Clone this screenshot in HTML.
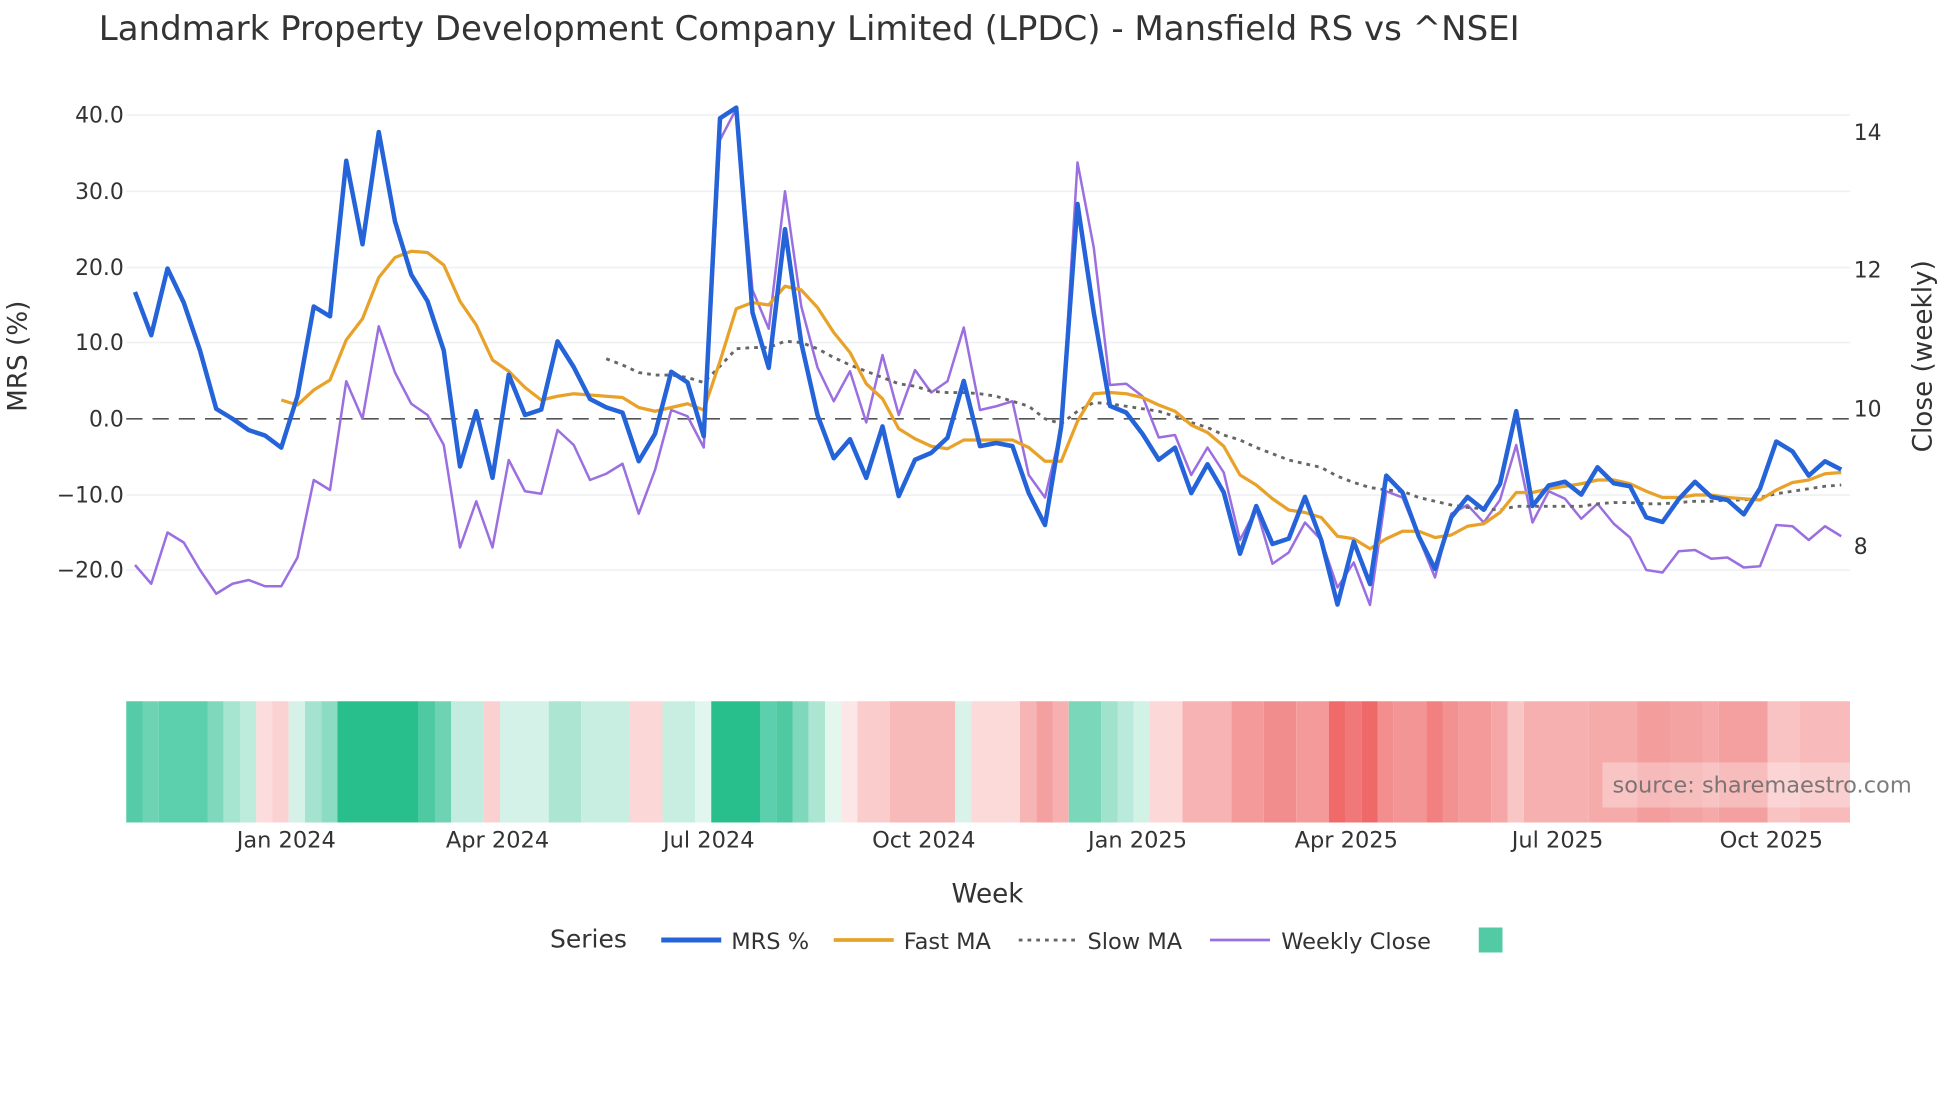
<!DOCTYPE html>
<html><head><meta charset="utf-8"><style>
html,body{margin:0;padding:0;background:#fff;}
svg{display:block;font-family:"DejaVu Sans","Liberation Sans",sans-serif;}
</style></head><body>
<svg width="1960" height="1102" viewBox="0 0 1568 881.6" preserveAspectRatio="none" xmlns="http://www.w3.org/2000/svg">
<rect width="1568" height="881.6" fill="#fff"/>
<text x="79" y="32" font-size="27.2" style="fill:#333">Landmark Property Development Company Limited (LPDC) - Mansfield RS vs ^NSEI</text>
<g stroke="#eef0f4" stroke-width="1.3">
<line x1="101" x2="1480" y1="92" y2="92"/><line x1="101" x2="1480" y1="153" y2="153"/>
<line x1="101" x2="1480" y1="214" y2="214"/><line x1="101" x2="1480" y1="274" y2="274"/>
<line x1="101" x2="1480" y1="396" y2="396"/><line x1="101" x2="1480" y1="456" y2="456"/>
</g>
<line x1="101" x2="1480" y1="335" y2="335" stroke="#555" stroke-width="1.3" stroke-dasharray="13,8"/>
<g font-size="17.5" fill="#333" text-anchor="end">
<text x="99" y="98">40.0</text><text x="99" y="159">30.0</text><text x="99" y="220">20.0</text>
<text x="99" y="280">10.0</text><text x="99" y="341">0.0</text><text x="99" y="402">−10.0</text><text x="99" y="462">−20.0</text>
</g>
<g font-size="17.5" fill="#333">
<text x="1483" y="112">14</text><text x="1483" y="222">12</text><text x="1483" y="333">10</text><text x="1483" y="443">8</text>
</g>
<text transform="translate(21,285) rotate(-90)" font-size="21" fill="#333" text-anchor="middle">MRS (%)</text>
<text transform="translate(1545,285) rotate(-90)" font-size="21" fill="#333" text-anchor="middle">Close (weekly)</text>

<polyline fill="none" stroke="#9b6fe0" stroke-width="2" stroke-linejoin="round" points="108,452 121,467 134,426 147,434 160,456 173,475 186,467 199,464 212,469 225,469 238,446 251,384 264,392 277,305 290,335 303,261 316,298 329,323 342,332 355,356 368,438 381,401 394,438 407,368 420,393 433,395 446,344 459,356 472,384 485,379 498,371 511,411 524,376 537,328 550,333 563,358 576,112 589,87 602,232 615,263 628,153 641,245 654,294 667,321 680,297 693,338 706,284 719,332 732,296 745,314 758,305 771,262 784,328 797,325 810,321 823,380 836,398 849,343 862,130 875,198 888,308 901,307 914,317 927,350 940,348 953,380 966,358 979,378 992,432 1005,407 1018,451 1031,442 1044,418 1057,432 1070,470 1083,450 1096,484 1109,393 1122,398 1135,430 1148,462 1161,411 1174,404 1187,418 1200,400 1213,356 1226,418 1239,393 1252,399 1265,415 1278,403 1291,419 1304,430 1317,456 1330,458 1343,441 1356,440 1369,447 1382,446 1395,454 1408,453 1421,420 1434,421 1447,432 1460,421 1473,429"/>
<polyline fill="none" stroke="#666" stroke-width="2.3" stroke-dasharray="3,4" points="485,287 498,292 511,298 524,300 537,300 550,302 563,306 576,293 589,279 602,278 615,278 628,273 641,274 654,279 667,286 680,292 693,297 706,302 719,307 732,309 745,313 758,314 771,314 784,315 797,317 810,321 823,325 836,335 849,339 862,329 875,322 888,323 901,325 914,327 927,329 940,333 953,338 966,342 979,348 992,352 1005,358 1018,363 1031,368 1044,371 1057,374 1070,381 1083,386 1096,390 1109,392 1122,393 1135,398 1148,401 1161,404 1174,406 1187,407 1200,408 1213,405 1226,405 1239,405 1252,405 1265,405 1278,403 1291,402 1304,402 1317,403 1330,403 1343,402 1356,401 1369,401 1382,400 1395,400 1408,398 1421,395 1434,393 1447,391 1460,389 1473,388"/>
<polyline fill="none" stroke="#e8a22a" stroke-width="2.6" stroke-linejoin="round" points="225,320 238,324 251,312 264,304 277,272 290,255 303,222 316,206 329,201 342,202 355,212 368,241 381,260 394,288 407,297 420,310 433,320 446,317 459,315 472,316 485,317 498,318 511,326 524,329 537,326 550,323 563,328 576,289 589,247 602,242 615,244 628,229 641,232 654,246 667,266 680,282 693,307 706,319 719,343 732,351 745,357 758,359 771,352 784,352 797,352 810,352 823,358 836,369 849,369 862,337 875,315 888,314 901,315 914,318 927,324 940,329 953,340 966,346 979,357 992,380 1005,388 1018,399 1031,408 1044,410 1057,414 1070,429 1083,431 1096,439 1109,431 1122,425 1135,425 1148,430 1161,428 1174,421 1187,419 1200,410 1213,394 1226,394 1239,391 1252,389 1265,387 1278,384 1291,384 1304,387 1317,393 1330,398 1343,398 1356,396 1369,396 1382,398 1395,399 1408,400 1421,392 1434,386 1447,384 1460,379 1473,378"/>
<polyline fill="none" stroke="#2563d9" stroke-width="3.6" stroke-linejoin="round" points="108,233.6 121,268.2 134,214.8 147,242.1 160,280.4 173,327.1 186,335 199,344.1 212,348.4 225,358.1 238,316.8 251,245.2 264,253.1 277,128.6 290,195.4 303,105.6 316,177.2 329,219.7 342,240.9 355,280.4 368,373.2 381,328.9 394,382.3 407,299.8 420,332 433,327.7 446,273.1 459,293.7 472,319.2 485,325.9 498,330.1 511,369 524,347.1 537,297.4 550,305.9 563,349 576,94.6 589,86.1 602,250 615,294.3 628,183.3 641,274.3 654,332 667,366.6 680,351.4 693,382.3 706,341.1 719,396.9 732,367.8 745,362.3 758,350.2 771,304.7 784,356.9 797,354.4 810,356.9 823,394.5 836,420 849,341.1 862,163.2 875,250 888,324.7 901,330.1 914,347.1 927,367.8 940,358.1 953,394.5 966,371.4 979,393.9 992,443 1005,404.8 1018,435.2 1031,430.9 1044,397.5 1057,432.1 1070,483.7 1083,433.3 1096,467.3 1109,380.5 1122,393.9 1135,429.1 1148,455.2 1161,413.9 1174,397.5 1187,407.8 1200,387.2 1213,328.9 1226,404.8 1239,388.4 1252,385.4 1265,395.7 1278,373.8 1291,386.6 1304,389 1317,413.9 1330,417.6 1343,399.3 1356,385.4 1369,397.5 1382,400 1395,411.5 1408,390.8 1421,353.2 1434,361.1 1447,380.5 1460,369 1473,375.7"/>

<g>
<rect x="101" y="561" width="13" height="97" fill="#55cca7"/>
<rect x="114" y="561" width="13" height="97" fill="#6dd3b3"/>
<rect x="127" y="561" width="39" height="97" fill="#5ccfac"/>
<rect x="166" y="561" width="13" height="97" fill="#7fd8bc"/>
<rect x="179" y="561" width="13" height="97" fill="#a6e5d0"/>
<rect x="192" y="561" width="13" height="97" fill="#bdebdc"/>
<rect x="205" y="561" width="13" height="97" fill="#fcdcdc"/>
<rect x="218" y="561" width="13" height="97" fill="#fad2d2"/>
<rect x="231" y="561" width="13" height="97" fill="#d6f2e8"/>
<rect x="244" y="561" width="13" height="97" fill="#a3e3cf"/>
<rect x="257" y="561" width="13" height="97" fill="#8bdcc2"/>
<rect x="270" y="561" width="65" height="97" fill="#28bf8c"/>
<rect x="335" y="561" width="13" height="97" fill="#4ec9a2"/>
<rect x="348" y="561" width="13" height="97" fill="#6dd3b3"/>
<rect x="361" y="561" width="26" height="97" fill="#c2ecdf"/>
<rect x="387" y="561" width="13" height="97" fill="#fbd0d0"/>
<rect x="400" y="561" width="39" height="97" fill="#d4f2e7"/>
<rect x="439" y="561" width="26" height="97" fill="#ace5d1"/>
<rect x="465" y="561" width="39" height="97" fill="#c8eee1"/>
<rect x="504" y="561" width="26" height="97" fill="#fbd7d7"/>
<rect x="530" y="561" width="26" height="97" fill="#c8eee1"/>
<rect x="556" y="561" width="13" height="97" fill="#e0f6ee"/>
<rect x="569" y="561" width="39" height="97" fill="#28bf8c"/>
<rect x="608" y="561" width="13" height="97" fill="#5ccfac"/>
<rect x="621" y="561" width="13" height="97" fill="#4ec9a2"/>
<rect x="634" y="561" width="13" height="97" fill="#80d8bc"/>
<rect x="647" y="561" width="13" height="97" fill="#ace5d1"/>
<rect x="660" y="561" width="13" height="97" fill="#e3f7ef"/>
<rect x="673" y="561" width="13" height="97" fill="#fde6e6"/>
<rect x="686" y="561" width="26" height="97" fill="#fbcccc"/>
<rect x="712" y="561" width="52" height="97" fill="#f8b9b9"/>
<rect x="764" y="561" width="13" height="97" fill="#d9f3ea"/>
<rect x="777" y="561" width="39" height="97" fill="#fcdada"/>
<rect x="816" y="561" width="13" height="97" fill="#f7b4b4"/>
<rect x="829" y="561" width="13" height="97" fill="#f4a0a0"/>
<rect x="842" y="561" width="13" height="97" fill="#f6b0b0"/>
<rect x="855" y="561" width="26" height="97" fill="#7bd7ba"/>
<rect x="881" y="561" width="13" height="97" fill="#a0e2cc"/>
<rect x="894" y="561" width="13" height="97" fill="#baeadb"/>
<rect x="907" y="561" width="13" height="97" fill="#d2f2e6"/>
<rect x="920" y="561" width="26" height="97" fill="#fcd8d8"/>
<rect x="946" y="561" width="39" height="97" fill="#f7b3b3"/>
<rect x="985" y="561" width="26" height="97" fill="#f49a9a"/>
<rect x="1011" y="561" width="26" height="97" fill="#f28d8d"/>
<rect x="1037" y="561" width="26" height="97" fill="#f49a9a"/>
<rect x="1063" y="561" width="13" height="97" fill="#f06a6a"/>
<rect x="1076" y="561" width="13" height="97" fill="#f07878"/>
<rect x="1089" y="561" width="13" height="97" fill="#ef6969"/>
<rect x="1102" y="561" width="13" height="97" fill="#f38e8e"/>
<rect x="1115" y="561" width="26" height="97" fill="#f39595"/>
<rect x="1141" y="561" width="13" height="97" fill="#f28080"/>
<rect x="1154" y="561" width="13" height="97" fill="#f39090"/>
<rect x="1167" y="561" width="26" height="97" fill="#f49a9a"/>
<rect x="1193" y="561" width="13" height="97" fill="#f5a6a6"/>
<rect x="1206" y="561" width="13" height="97" fill="#f9c6c6"/>
<rect x="1219" y="561" width="52" height="97" fill="#f7b0b0"/>
<rect x="1271" y="561" width="39" height="97" fill="#f6abab"/>
<rect x="1310" y="561" width="26" height="97" fill="#f49d9d"/>
<rect x="1336" y="561" width="26" height="97" fill="#f4a3a3"/>
<rect x="1362" y="561" width="13" height="97" fill="#f5a9a9"/>
<rect x="1375" y="561" width="39" height="97" fill="#f4a0a0"/>
<rect x="1414" y="561" width="26" height="97" fill="#f9c3c3"/>
<rect x="1440" y="561" width="40" height="97" fill="#f8baba"/>
</g>
<rect x="1282" y="610" width="198" height="36" fill="#fff" fill-opacity="0.3"/>
<text x="1290" y="634" font-size="18" fill="#666" fill-opacity="0.85">source: sharemaestro.com</text>

<g font-size="18" fill="#333" text-anchor="middle">
<text x="229" y="678">Jan 2024</text><text x="398" y="678">Apr 2024</text><text x="567" y="678">Jul 2024</text>
<text x="739" y="678">Oct 2024</text><text x="910" y="678">Jan 2025</text><text x="1077" y="678">Apr 2025</text>
<text x="1246" y="678">Jul 2025</text><text x="1417" y="678">Oct 2025</text>
</g>
<text x="790" y="722" font-size="21" fill="#333" text-anchor="middle">Week</text>
<text x="440" y="758" font-size="20" fill="#333">Series</text>
<line x1="529" x2="577" y1="752" y2="752" stroke="#2563d9" stroke-width="4"/>
<text x="585" y="759" font-size="18" fill="#333">MRS %</text>
<line x1="667" x2="715" y1="752" y2="752" stroke="#e8a22a" stroke-width="3"/>
<text x="723" y="759" font-size="18" fill="#333">Fast MA</text>
<line x1="815" x2="861" y1="752" y2="752" stroke="#666" stroke-width="2.3" stroke-dasharray="3,4"/>
<text x="870" y="759" font-size="18" fill="#333">Slow MA</text>
<line x1="968" x2="1016" y1="752" y2="752" stroke="#9b6fe0" stroke-width="2.2"/>
<text x="1025" y="759" font-size="18" fill="#333">Weekly Close</text>
<rect x="1183" y="742" width="19" height="20" fill="#52cba5"/>
</svg>
</body></html>
